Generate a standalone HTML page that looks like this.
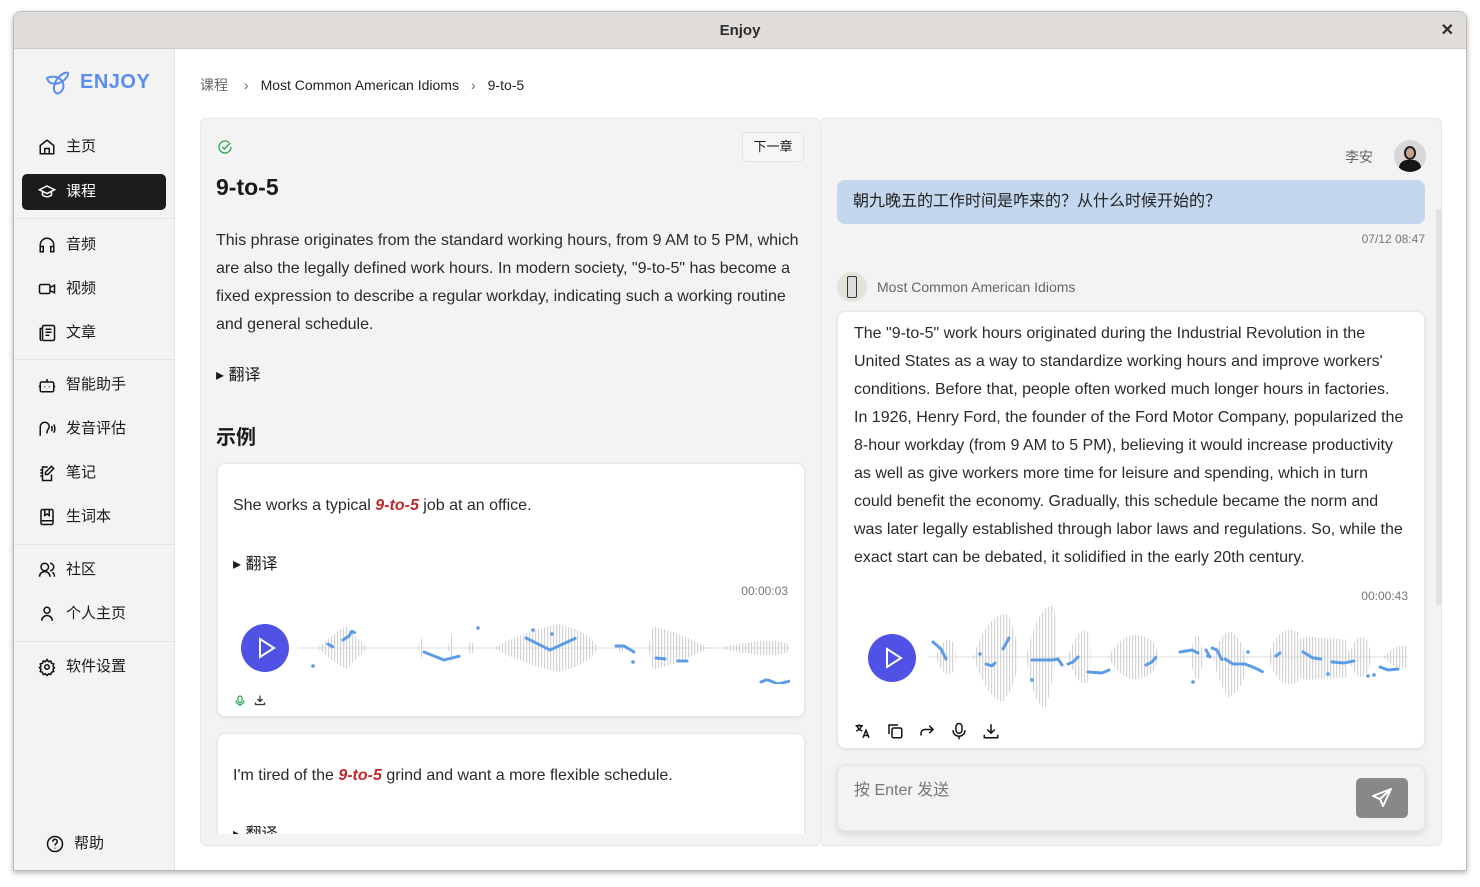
<!DOCTYPE html>
<html><head><meta charset="utf-8"><style>
*{box-sizing:border-box;margin:0;padding:0}
body{width:1480px;height:887px;background:#fff;font-family:"Liberation Sans","Noto Sans CJK SC",sans-serif;color:#1a1a1a;position:relative;overflow:hidden}
.abs{position:absolute}
.win{left:13px;top:11px;width:1454px;height:860px;border:1px solid #bdbdbd;border-radius:8px 8px 0 0;overflow:hidden;box-shadow:0 2px 6px rgba(0,0,0,.3)}
.title{left:0;top:0;width:100%;height:37px;background:#dfdcd9;border-bottom:1px solid #cfcbc7;text-align:center;font-weight:bold;font-size:15px;line-height:37px;color:#2c2c2c}
.side{left:0;top:37px;width:161px;height:823px;background:#f3f3f3;border-right:1px solid #e3e3e3}
.nav{position:absolute;left:8px;width:144px;height:36px;font-size:15px;line-height:36px;padding-left:44px;color:#1a1a1a}
.nav svg{position:absolute;left:16px;top:9px}
.nav.act{background:#1c1c1e;color:#fff;border-radius:5px}
.div{position:absolute;left:0;width:160px;height:1px;background:#e2e2e2}
.t{white-space:nowrap;position:absolute}
.card{background:#fff;border:1px solid #e6e6e6;border-radius:8px;box-shadow:0 1px 3px rgba(0,0,0,.08)}
.p{font-size:16px;line-height:28px;color:#2a2a2a}
</style></head><body>
<div class="abs win">
<div class="abs title">Enjoy<span style="position:absolute;right:12px;top:0;font-size:16px">✕</span></div>
<div class="abs side">
 <svg class="abs" style="left:30px;top:20px" width="28" height="28" viewBox="0 0 28 28" fill="none" stroke="#5b8def" stroke-width="2"><path d="M3 9c6-3 14-1 16 5 2 7-4 12-7 10-4-3-2-12 4-17 3-3 7-4 8-3 1 2-3 8-9 10-6 2-11 0-12-5z"/></svg>
 <div class="t" style="left:66px;top:22px;font-size:20px;font-weight:bold;color:#5b8def;letter-spacing:.5px">ENJOY</div>
 <div class="nav" style="top:80px"><svg width="18" height="18" viewBox="0 0 24 24" fill="none" stroke="#111" stroke-width="2"><path d="M3 10l9-7 9 7v11H3z M9 21v-7h6v7"/></svg>主页</div>
 <div class="nav act" style="top:125px"><svg width="18" height="18" viewBox="0 0 24 24" fill="none" stroke="#fff" stroke-width="2"><path d="M2 9l10-5 10 5-10 5z M6 11v5c3 3 9 3 12 0v-5"/></svg>课程</div>
 <div class="div" style="top:169px"></div>
 <div class="nav" style="top:178px"><svg width="18" height="18" viewBox="0 0 24 24" fill="none" stroke="#111" stroke-width="2"><path d="M3 18v-6a9 9 0 0118 0v6 M3 14h4v7H3z M17 14h4v7h-4z"/></svg>音频</div>
 <div class="nav" style="top:222px"><svg width="18" height="18" viewBox="0 0 24 24" fill="none" stroke="#111" stroke-width="2"><rect x="2" y="6" width="14" height="12" rx="2"/><path d="M16 10l6-3v10l-6-3"/></svg>视频</div>
 <div class="nav" style="top:266px"><svg width="18" height="18" viewBox="0 0 24 24" fill="none" stroke="#111" stroke-width="2"><rect x="6" y="2" width="16" height="20" rx="2"/><path d="M6 6H3v14a2 2 0 002 2 M10 7h8 M10 11h8 M10 15h5"/></svg>文章</div>
 <div class="div" style="top:310px"></div>
 <div class="nav" style="top:318px"><svg width="18" height="18" viewBox="0 0 24 24" fill="none" stroke="#111" stroke-width="2"><rect x="3" y="8" width="18" height="13" rx="2"/><path d="M12 8V4 M9 14v1 M15 14v1 M1 14h2 M21 14h2"/></svg>智能助手</div>
 <div class="nav" style="top:362px"><svg width="18" height="18" viewBox="0 0 24 24" fill="none" stroke="#111" stroke-width="2"><path d="M3 21V9a6 6 0 0112 0c0 3-3 4-3 7v2 M18 8c1 2 1 5 0 7 M21 6c2 3 2 8 0 11"/></svg>发音评估</div>
 <div class="nav" style="top:406px"><svg width="18" height="18" viewBox="0 0 24 24" fill="none" stroke="#111" stroke-width="2"><path d="M13 4H6v18h12v-8 M3 8h3 M3 12h3 M3 16h3 M18 3l3 3-8 8h-3v-3z"/></svg>笔记</div>
 <div class="nav" style="top:450px"><svg width="18" height="18" viewBox="0 0 24 24" fill="none" stroke="#111" stroke-width="2"><rect x="4" y="2" width="16" height="20" rx="2"/><path d="M9 2v8l3-2 3 2V2 M4 17h16"/></svg>生词本</div>
 <div class="div" style="top:495px"></div>
 <div class="nav" style="top:503px"><svg width="18" height="18" viewBox="0 0 24 24" fill="none" stroke="#111" stroke-width="2"><circle cx="9" cy="8" r="5"/><path d="M2 21a7 7 0 0114 0 M16 3a5 5 0 010 10 M19 15c2 1 3 3 3 6"/></svg>社区</div>
 <div class="nav" style="top:547px"><svg width="18" height="18" viewBox="0 0 24 24" fill="none" stroke="#111" stroke-width="2"><circle cx="12" cy="7" r="4"/><path d="M5 21a7 7 0 0114 0"/></svg>个人主页</div>
 <div class="div" style="top:592px"></div>
 <div class="nav" style="top:600px"><svg width="18" height="18" viewBox="0 0 24 24" fill="none" stroke="#111" stroke-width="2"><circle cx="12" cy="12" r="3"/><path d="M12 2l2 3 3-1 1 3 3 1-1 3 2 2-2 2 1 3-3 1-1 3-3-1-2 3-2-3-3 1-1-3-3-1 1-3-2-2 2-2-1-3 3-1 1-3 3 1z"/></svg>软件设置</div>
 <div class="nav" style="top:777px;left:16px"><svg width="18" height="18" viewBox="0 0 24 24" fill="none" stroke="#111" stroke-width="2"><circle cx="12" cy="12" r="10"/><path d="M9 9a3 3 0 115 2c-1 1-2 1-2 3 M12 17v1"/></svg>帮助</div>
</div>

<div class="t" style="left:186px;top:63px;font-size:14px;color:#666">课程 <span style="margin:0 12px">›</span><span style="color:#222">Most Common American Idioms</span><span style="margin:0 12px;color:#666">›</span><span style="color:#222">9-to-5</span></div>

<div class="abs" style="left:186px;top:106px;width:621px;height:728px;background:#f3f3f3;border:1px solid #e6e6e6;border-radius:6px;overflow:hidden">
 <div class="abs" style="left:0;top:0;width:620px;height:715px;overflow:hidden">
 <svg class="abs" style="left:16px;top:20px" width="16" height="16" viewBox="0 0 24 24" fill="none" stroke="#2fa84f" stroke-width="2"><path d="M21 12a9 9 0 11-3-6.7 M8 12l3 3 9-9"/></svg>
 <div class="abs" style="left:541px;top:13px;width:62px;height:30px;border:1px solid #e2e2e2;border-radius:5px;background:#f6f6f6;font-size:13px;line-height:28px;text-align:center">下一章</div>
 <div class="t" style="left:15px;top:55px;font-size:23px;font-weight:bold">9-to-5</div>
 <div class="t p" style="left:15px;top:108px">This phrase originates from the standard working hours, from 9 AM to 5 PM, which<br>are also the legally defined work hours. In modern society, "9-to-5" has become a<br>fixed expression to describe a regular workday, indicating such a working routine<br>and general schedule.</div>
 <div class="t" style="left:15px;top:242px;font-size:16px">▸ 翻译</div>
 <div class="t" style="left:15px;top:302px;font-size:20px;font-weight:bold">示例</div>
 <div class="abs card" style="left:16px;top:344px;width:588px;height:254px">
  <div class="t p" style="left:15px;top:28px">She works a typical <b style="color:#c0292e;font-style:italic">9-to-5</b> job at an office.</div>
  <div class="t" style="left:15px;top:86px;font-size:16px">▸ 翻译</div>
  <div class="t" style="right:16px;top:120px;font-size:12px;color:#777">00:00:03</div>
  <div class="abs" style="left:23px;top:160px;width:48px;height:48px;border-radius:50%;background:#5052e6"><svg width="48" height="48"><path d="M19 15v18l14-9z" fill="none" stroke="#fff" stroke-width="2"/></svg></div>
  <svg class="abs" style="left:80px;top:150px" width="492" height="70">
   <defs><pattern id="st" width="3" height="70" patternUnits="userSpaceOnUse"><rect width="1.2" height="70" fill="#d4d4d4"/></pattern></defs>
   <line x1="0" y1="34" x2="492" y2="34" stroke="#ddd"/>
   <path fill="url(#st)" d="M20 34 Q35 20 48 12 Q55 20 70 34 Q55 48 48 55 Q35 48 20 34z M120 34L123 22 126 34 123 46z M150 34L153 18 156 34 153 50z M170 34L173 24 176 34 173 44z M195 34 Q230 16 260 10 Q290 16 300 34 Q290 52 260 58 Q230 52 195 34z M320 34L323 26 326 34 323 42z M350 34L355 12 375 18 395 26 410 34 395 42 375 50 355 56z M420 34Q470 22 490 30 L490 38 Q470 46 420 34z"/>
   <g fill="none" stroke="#5b9be8" stroke-width="3" stroke-linecap="round" stroke-dasharray="2 1.5">
    <path d="M30 30l5 3 M45 26l6-4 3-5 3 2 M126 38l20 8 16-4 M228 24l24 12 26-12 M318 32l8 0 10 6 M358 44l10 1 M380 47l10 0 M428 76l8 0 M463 68l5-2 M470 66l10 4 12-3"/>
   </g>
   <g fill="#5b9be8"><circle cx="15" cy="52" r="1.8"/><circle cx="180" cy="14" r="1.8"/><circle cx="235" cy="16" r="1.8"/><circle cx="254" cy="20" r="1.8"/><circle cx="335" cy="48" r="1.8"/></g>
  </svg>
  <svg class="abs" style="left:16px;top:230px" width="12" height="14" viewBox="0 0 24 24" fill="none" stroke="#2fa84f" stroke-width="2.5"><rect x="8" y="2" width="8" height="13" rx="4"/><path d="M4 11a8 8 0 0016 0 M12 19v4"/></svg>
  <svg class="abs" style="left:36px;top:230px" width="12" height="12" viewBox="0 0 24 24" fill="none" stroke="#333" stroke-width="2.5"><path d="M12 3v12 M7 10l5 5 5-5 M3 17v4h18v-4"/></svg>
 </div>
 <div class="abs card" style="left:16px;top:614px;width:588px;height:140px">
  <div class="t p" style="left:15px;top:28px">I'm tired of the <b style="color:#c0292e;font-style:italic">9-to-5</b> grind and want a more flexible schedule.</div>
  <div class="t" style="left:15px;top:86px;font-size:16px">▸ 翻译</div>
 </div>
 </div>
</div>

<div class="abs" style="left:807px;top:106px;width:621px;height:728px;background:#f3f3f3;border:1px solid #e6e6e6;border-left:none;border-radius:0 6px 6px 0">
 <div class="abs" style="left:615px;top:90px;width:6px;height:396px;background:#e0e0e0;border-radius:3px"></div>
 <div class="t" style="right:68px;top:28px;font-size:14px;color:#666">李安</div>
 <div class="abs" style="left:573px;top:21px;width:32px;height:32px;border-radius:50%;overflow:hidden;background:#d8d8d8"><div style="position:absolute;left:10px;top:6px;width:12px;height:14px;border-radius:50%;background:#c9a48a;border:2px solid #222"></div><div style="position:absolute;left:5px;top:20px;width:22px;height:16px;border-radius:8px 8px 0 0;background:#151515"></div></div>
 <div class="abs" style="left:16px;top:61px;width:588px;height:44px;background:#c3d7ef;border-radius:8px;font-size:16px;line-height:44px;padding-left:16px;color:#222">朝九晚五的工作时间是咋来的？从什么时候开始的？</div>
 <div class="t" style="right:16px;top:113px;font-size:12px;color:#777">07/12 08:47</div>
 <div class="abs" style="left:16px;top:153px;width:30px;height:30px;border-radius:50%;background:#e6e3d8"><div style="position:absolute;left:10px;top:4px;width:10px;height:22px;border:1.5px solid #333;border-radius:2px;background:#ddd"></div></div>
 <div class="t" style="left:56px;top:160px;font-size:14px;color:#666">Most Common American Idioms</div>
 <div class="abs card" style="left:16px;top:192px;width:588px;height:438px">
  <div class="t p" style="left:16px;top:8px">The "9-to-5" work hours originated during the Industrial Revolution in the<br>United States as a way to standardize working hours and improve workers'<br>conditions. Before that, people often worked much longer hours in factories.<br>In 1926, Henry Ford, the founder of the Ford Motor Company, popularized the<br>8-hour workday (from 9 AM to 5 PM), believing it would increase productivity<br>as well as give workers more time for leisure and spending, which in turn<br>could benefit the economy. Gradually, this schedule became the norm and<br>was later legally established through labor laws and regulations. So, while the<br>exact start can be debated, it solidified in the early 20th century.</div>
  <div class="t" style="right:16px;top:277px;font-size:12px;color:#777">00:00:43</div>
  <div class="abs" style="left:30px;top:322px;width:48px;height:48px;border-radius:50%;background:#5052e6"><svg width="48" height="48"><path d="M19 15v18l14-9z" fill="none" stroke="#fff" stroke-width="2"/></svg></div>
  <svg class="abs" style="left:90px;top:290px" width="490" height="110">
   <defs><pattern id="st2" width="3" height="110" patternUnits="userSpaceOnUse"><rect width="1.2" height="110" fill="#d4d4d4"/></pattern></defs>
   <line x1="0" y1="55" x2="480" y2="55" stroke="#ddd"/>
   <path fill="url(#st2)" d="M8 55Q15 32 25 40 30 55 25 70 15 78 8 55z M45 55Q60 10 80 12 90 35 90 55 90 80 75 100 60 98 45 55z M98 55Q110 2 125 4 135 40 118 106 105 104 98 55z M140 55 Q150 22 160 30 165 55 160 80 150 88 140 55z M180 55Q200 20 225 40 235 55 225 70 200 90 180 55z M262 55Q270 10 275 55 270 100 262 55z M285 55Q300 10 315 45 325 80 300 96 290 80 285 55z M340 55Q360 30 420 38 L420 75 Q360 82 340 55z M400 55 Q410 40 422 50 L422 60 Q410 70 400 55z M425 55Q432 38 440 55 432 72 425 55z M455 55Q470 40 480 45 L480 65 Q470 70 455 55z"/>
   <path fill="url(#st2)" d="M340 55Q350 20 370 30 380 55 370 80 350 90 340 55z M420 55 Q430 25 440 40 445 55 440 70 430 85 420 55z M345 55Q380 20 405 45 L405 65 Q380 95 345 55z"/>
   <g fill="none" stroke="#5b9be8" stroke-width="3" stroke-linecap="round" stroke-dasharray="2 1.5">
    <path d="M5 40l8 7 5 10 M58 62l6 2 3-3 M75 47l6-11 M104 58l20 0 6-1 4 6 M140 62l5-2 6-6 M160 70l14 1 7-3 M218 63l6-3 4-5 M252 50l12-2 6 3 M278 48l4 7 M284 46l5 2 5 10 M297 57l8 5 12 0 10 4 8 4 M348 54l4-3 M375 50l10 6 8 1 M404 60l12 1 10-2 M452 65l8 3 10-1"/>
   </g>
   <g fill="#5b9be8"><circle cx="52" cy="52" r="1.8"/><circle cx="104" cy="78" r="1.8"/><circle cx="265" cy="80" r="1.8"/><circle cx="280" cy="54" r="1.8"/><circle cx="320" cy="50" r="1.8"/><circle cx="400" cy="72" r="1.8"/><circle cx="440" cy="74" r="1.8"/><circle cx="446" cy="73" r="1.8"/></g>
  </svg>
  <div class="t" style="left:16px;top:410px;font-size:14px;color:#111">
   <svg width="18" height="18" viewBox="0 0 24 24" fill="none" stroke="#111" stroke-width="2" style="position:absolute;left:0"><path d="M2 5h10 M7 3v2 M4 5c1 4 4 6 7 7 M10 5c-1 4-4 6-7 7 M12 21l4-10 4 10 M13.5 18h5"/></svg>
   <svg width="18" height="18" viewBox="0 0 24 24" fill="none" stroke="#111" stroke-width="2" style="position:absolute;left:32px"><rect x="8" y="8" width="13" height="13" rx="2"/><path d="M4 16V4h12"/></svg>
   <svg width="18" height="18" viewBox="0 0 24 24" fill="none" stroke="#111" stroke-width="2" style="position:absolute;left:64px"><path d="M4 18v-3a5 5 0 015-5h11 M15 5l5 5-5 5"/></svg>
   <svg width="18" height="18" viewBox="0 0 24 24" fill="none" stroke="#111" stroke-width="2" style="position:absolute;left:96px"><rect x="8" y="2" width="8" height="13" rx="4"/><path d="M4 11a8 8 0 0016 0 M12 19v4"/></svg>
   <svg width="18" height="18" viewBox="0 0 24 24" fill="none" stroke="#111" stroke-width="2" style="position:absolute;left:128px"><path d="M12 3v12 M7 10l5 5 5-5 M3 17v4h18v-4"/></svg>
  </div>
 </div>
 <div class="abs" style="left:16px;top:646px;width:588px;height:66px;background:#f3f3f3;border:1px solid #e6e6e6;border-radius:8px;box-shadow:0 3px 8px rgba(0,0,0,.12)">
  <div class="t" style="left:16px;top:10px;font-size:16px;color:#777">按 Enter 发送</div>
  <div class="abs" style="left:518px;top:12px;width:52px;height:40px;background:#888;border-radius:5px"><svg width="52" height="40" viewBox="0 0 52 40"><path d="M35 11L17 18l7 3 3 7z M24 21l11-10" fill="none" stroke="#fff" stroke-width="2" stroke-linejoin="round"/></svg></div>
 </div>
</div>
</div>
</body></html>
